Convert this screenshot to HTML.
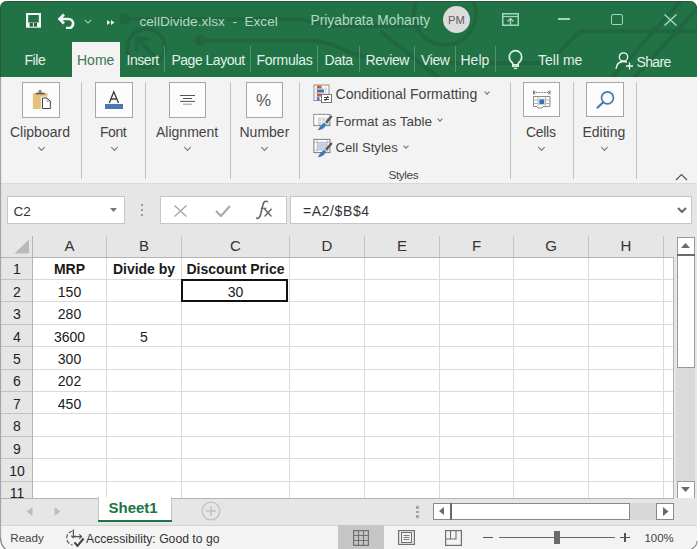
<!DOCTYPE html>
<html><head><meta charset="utf-8">
<style>
*{margin:0;padding:0;box-sizing:border-box}
html,body{width:700px;height:549px;overflow:hidden;background:#fff;font-family:"Liberation Sans",sans-serif;position:relative}
.a{position:absolute;white-space:nowrap;line-height:1}
#win{position:absolute;left:0;top:1px;width:697px;height:548px;background:#f3f3f3;border-radius:7px 7px 6px 6px;overflow:hidden}
#lb{position:absolute;left:0;top:40px;width:1px;height:506px;background:#707070}
#title{position:absolute;left:0;top:1px;width:697px;height:76px;background:#217346;border-radius:7px 7px 0 0;overflow:hidden}
.tt{color:#b4d9c1;font-size:13.6px}
.tab{color:#e2f1e7;font-size:14px}
.tsep{position:absolute;top:46px;height:26px;width:1px;background:#4f9670}
.ib{position:absolute;top:82px;width:37px;height:35px;border:1px solid #a6a6a6;background:#fcfcfc}
.gl{color:#444;font-size:14px}
.chev{position:absolute;width:5px;height:5px;border-right:1px solid #6e6e6e;border-bottom:1px solid #6e6e6e;transform:rotate(45deg)}
.vs{position:absolute;top:82px;height:97px;width:1px;background:#c4c4c4}
.hdr{position:absolute;color:#333;font-size:14px;text-align:center;line-height:1}
.hl{position:absolute;background:#bcbcbc}
.gh{position:absolute;height:1px;background:#dcdcdc}
.gv{position:absolute;width:1px;background:#dcdcdc}
.c{position:absolute;font-size:14px;color:#1a1a1a;text-align:center;line-height:1}
.b{font-weight:bold}
</style></head><body>
<div id="win"></div>
<div id="title">
  <svg class="a" style="left:0;top:0" width="697" height="76" viewBox="0 0 697 76">
    <g fill="none" stroke="#22663f" stroke-width="4" opacity="1">
      <path d="M125 18 H300 L330 25 H420"/>
      <circle cx="125" cy="18" r="3.5" fill="#22663f"/>
      <circle cx="146" cy="47" r="19"/>
      <path d="M156 57 L138 39 M137 50 V38 H149"/>
      <circle cx="200" cy="39.5" r="3.5" fill="#22663f"/>
      <path d="M200 39.5 H310 Q330 40 350 52 L395 62"/>
      <circle cx="445" cy="13" r="31"/>
      <path d="M380 30 L440 78"/>
      <path d="M548 62 L580 30.3 H697"/>
      <path d="M681 0 L611 78"/>
      <path d="M704 0 L633 78"/>
      <path d="M440 62 H548"/>
    </g>
  </svg>
</div>
<!-- save icon -->
<svg class="a" style="left:26px;top:13px" width="16" height="15" viewBox="0 0 16 15">
  <path d="M0 0 H15 V14.7 H0 Z" fill="#f3f8f5"/>
  <rect x="2.2" y="2" width="10.6" height="7.6" fill="#217346"/>
  <rect x="3.7" y="10" width="7.3" height="3.6" fill="#2a5d42"/>
  <rect x="6.9" y="10" width="1" height="3.6" fill="#f3f8f5"/>
</svg>
<!-- undo -->
<svg class="a" style="left:57px;top:13px" width="20" height="16" viewBox="0 0 20 16">
  <path d="M3 6 H11.5 A4.6 4.6 0 0 1 11.5 15.2 H9" fill="none" stroke="#f3f8f5" stroke-width="2.7"/>
  <path d="M7 1.5 L2.5 6 L7 10.5" fill="none" stroke="#f3f8f5" stroke-width="2.7" stroke-linejoin="miter"/>
</svg>
<svg class="a" style="left:83.5px;top:18.5px" width="8" height="5" viewBox="0 0 8 5">
  <path d="M0.8 0.8 L4 4 L7.2 0.8" fill="none" stroke="#9cc9ad" stroke-width="1.1"/>
</svg>
<svg class="a" style="left:106.5px;top:20px" width="8" height="5" viewBox="0 0 8 5">
  <path d="M0 0 L3.4 2.5 L0 5 Z M4 0 L7.5 2.5 L4 5 Z" fill="#eaf4ee"/>
</svg>
<div class="a tt" style="left:139.5px;top:14.5px">cellDivide.xlsx&nbsp; - &nbsp;Excel</div>
<div class="a tt" style="left:310.5px;top:13.8px;font-size:13.8px">Priyabrata Mohanty</div>
<div class="a" style="left:443px;top:6px;width:27px;height:27px;border-radius:50%;background:#dcdcdc"></div>
<div class="a" style="left:443px;top:14.5px;width:27px;text-align:center;font-size:11.2px;color:#5e5e5e">PM</div>
<!-- ribbon display options -->
<svg class="a" style="left:502px;top:13px" width="17" height="13" viewBox="0 0 17 13">
  <rect x="0.75" y="0.75" width="15.5" height="11.5" fill="none" stroke="#a7d3b8" stroke-width="1.5"/>
  <path d="M1 3.5 H16" stroke="#a7d3b8" stroke-width="1.2"/>
  <path d="M8.5 12 V6 M5.5 8.5 L8.5 5.5 L11.5 8.5" fill="none" stroke="#a7d3b8" stroke-width="1.4"/>
</svg>
<div class="a" style="left:558px;top:18px;width:12px;height:1.5px;background:#a7d3b8"></div>
<div class="a" style="left:611px;top:14px;width:12px;height:11px;border:1.4px solid #a7d3b8;border-radius:2px"></div>
<svg class="a" style="left:664px;top:13.5px" width="13" height="12" viewBox="0 0 13 12">
  <path d="M0.5 0.5 L12.5 11.5 M12.5 0.5 L0.5 11.5" stroke="#a7d3b8" stroke-width="1.5"/>
</svg>

<div class="a tab" style="left:24.5px;top:52.6px;letter-spacing:-0.45px">File</div>
<div class="a" style="left:72px;top:42px;width:48px;height:36px;background:#f3f3f3"></div>
<div class="a tab" style="left:77px;top:52.6px;color:#3b7754">Home</div>
<div class="a tab" style="left:126.5px;top:52.6px;letter-spacing:-0.45px">Insert</div>
<div class="tsep" style="left:164px"></div>
<div class="a tab" style="left:171.5px;top:52.6px;letter-spacing:-0.5px">Page Layout</div>
<div class="tsep" style="left:250px"></div>
<div class="a tab" style="left:256.5px;top:52.6px;letter-spacing:-0.31px">Formulas</div>
<div class="tsep" style="left:317px"></div>
<div class="a tab" style="left:324.5px;top:52.6px;letter-spacing:-0.33px">Data</div>
<div class="tsep" style="left:359px"></div>
<div class="a tab" style="left:365.5px;top:52.6px;letter-spacing:-0.4px">Review</div>
<div class="tsep" style="left:413.5px"></div>
<div class="a tab" style="left:421px;top:52.6px;letter-spacing:-0.4px">View</div>
<div class="tsep" style="left:455px"></div>
<div class="a tab" style="left:460.5px;top:52.6px">Help</div>
<div class="tsep" style="left:495px"></div>
<!-- lightbulb -->
<svg class="a" style="left:507px;top:49px" width="17" height="22" viewBox="0 0 17 22">
  <path d="M5.8 17.2 V14.2 C3.6 12.6 2.3 10.3 2.3 7.9 A6.2 6.2 0 0 1 14.7 7.9 C14.7 10.3 13.4 12.6 11.2 14.2 V17.2 Z" fill="none" stroke="#dcefe3" stroke-width="1.7"/>
  <path d="M6 15.6 H11" stroke="#dcefe3" stroke-width="1.2"/>
  <path d="M6.8 19.4 H10.2" stroke="#dcefe3" stroke-width="1.4"/>
</svg>
<div class="a tab" style="left:538px;top:52.6px">Tell me</div>
<!-- person add -->
<svg class="a" style="left:615px;top:52px" width="19" height="18" viewBox="0 0 19 18">
  <circle cx="8.5" cy="5" r="4.2" fill="none" stroke="#f2f7f4" stroke-width="1.3"/>
  <path d="M1 17 C1.5 12 4.5 9.5 8.5 9.5 C10 9.5 11 9.8 12 10.3" fill="none" stroke="#f2f7f4" stroke-width="1.3"/>
  <path d="M14.5 10.5 V17.5 M11 14 H18" stroke="#f2f7f4" stroke-width="1.3"/>
</svg>
<div class="a tab" style="left:636.5px;top:54.6px;letter-spacing:-0.66px">Share</div>

<div class="a" style="left:1px;top:183px;width:696px;height:1px;background:#dadada"></div>
<!-- Clipboard -->
<div class="ib" style="left:22px;width:38px;height:36px"></div>
<svg class="a" style="left:31px;top:88px" width="22" height="23" viewBox="0 0 22 23">
  <rect x="1.9" y="5" width="14.5" height="16" fill="#e6c07f"/>
  <circle cx="9.1" cy="3.4" r="1.7" fill="#8a8a8a"/>
  <rect x="4.9" y="4.7" width="8.8" height="1.7" fill="#5a5a5a"/>
  <path d="M10.6 9.3 H16.3 L19.9 12.9 V21 H10.6 Z" fill="#fff" stroke="#f3f3f3" stroke-width="1.5"/>
  <path d="M11.5 10 H16 L19.3 13.3 V20.5 H11.5 Z" fill="#fff" stroke="#444" stroke-width="1"/>
  <path d="M16 10 V13.3 H19.3" fill="none" stroke="#888" stroke-width="0.8"/>
</svg>
<div class="a gl" style="left:10px;top:124.6px">Clipboard</div>
<div class="chev" style="left:38.5px;top:145px"></div>
<div class="vs" style="left:81px"></div>
<!-- Font -->
<div class="ib" style="left:95px;width:38px;height:36px"></div>
<svg class="a" style="left:104px;top:90px" width="20" height="20" viewBox="0 0 20 20"><path d="M5.3 13 L9.8 1.8 L14.5 13 M7 9 H12.8" fill="none" stroke="#3c3c3c" stroke-width="1.35"/></svg>
<div class="a" style="left:104.5px;top:104.3px;width:18.5px;height:4.3px;background:#4a78b0"></div>
<div class="a gl" style="left:100px;top:124.6px;letter-spacing:-0.45px">Font</div>
<div class="chev" style="left:111.5px;top:145px"></div>
<div class="vs" style="left:145px"></div>
<!-- Alignment -->
<div class="ib" style="left:169px;width:37px;height:36px"></div>
<svg class="a" style="left:179px;top:94px" width="17" height="12" viewBox="0 0 17 12">
  <path d="M1 1.5 H16 M4 4.5 H13 M1 7.4 H16" stroke="#555" stroke-width="1"/>
  <path d="M4 10.2 H13" stroke="#9a9a9a" stroke-width="1"/>
</svg>
<div class="a gl" style="left:156px;top:124.6px">Alignment</div>
<div class="chev" style="left:184.5px;top:145px"></div>
<div class="vs" style="left:229.5px"></div>
<!-- Number -->
<div class="ib" style="left:245.5px;width:37px;height:36px"></div>
<div class="a" style="left:256px;top:92px;font-size:17px;color:#585858">%</div>
<div class="a gl" style="left:239.5px;top:124.6px">Number</div>
<div class="chev" style="left:261.5px;top:145px"></div>
<div class="vs" style="left:299px"></div>
<!-- Styles -->
<svg class="a" style="left:313px;top:84px" width="20" height="20" viewBox="0 0 20 20">
  <rect x="1" y="1" width="15" height="15.5" fill="#fff" stroke="#8c8c8c" stroke-width="1"/>
  <path d="M1 5 H16 M1 9 H16 M1 13 H16 M4 1 V16.5 M9 1 V16.5 M12.5 1 V16.5" stroke="#c9c9c9" stroke-width="0.8"/>
  <rect x="4" y="1.5" width="4.5" height="3" fill="#d2583a"/>
  <rect x="4" y="5.5" width="7" height="3" fill="#3d78b6"/>
  <rect x="4" y="9.5" width="4" height="3" fill="#d2583a"/>
  <rect x="4" y="13.3" width="2.5" height="3" fill="#3d78b6"/>
  <rect x="8.5" y="10.5" width="10" height="8" fill="#fff" stroke="#777" stroke-width="1"/>
  <path d="M11 13.5 H16 M11 15.5 H16 M15 12 L12 17" stroke="#333" stroke-width="0.9"/>
</svg>
<div class="a gl" style="left:335.5px;top:87px;font-size:14.1px">Conditional Formatting</div>
<div class="chev" style="left:484.5px;top:90px;width:4px;height:4px"></div>
<svg class="a" style="left:313px;top:113px" width="20" height="19" viewBox="0 0 20 19">
  <rect x="0.9" y="1.4" width="16" height="11.2" fill="#ccd6e1" stroke="#7a7a7a" stroke-width="1"/>
  <rect x="1.4" y="1.9" width="15" height="2.6" fill="#fff"/>
  <rect x="1.4" y="1.9" width="2.8" height="10.2" fill="#fff"/>
  <path d="M4.5 1.5 V12.5 M8.5 1.5 V12.5 M12.5 1.5 V12.5 M1 8.4 H16.9" stroke="#f4f6f8" stroke-width="0.9"/>
  <path d="M17.6 2.6 C19 2.3 19.8 3.4 19 4.6 L14 10.6 L12.1 9 Z" fill="#575757"/>
  <path d="M12.1 9 L14 10.6 L13.1 11.5 L11.2 9.9 Z" fill="#c4c4c4"/>
  <path d="M11.2 9.9 L13.1 11.5 C12.2 14.3 9.6 16.8 4.8 17.2 C6.3 14.2 8.4 11.1 11.2 9.9 Z" fill="#4079bd"/>
</svg>
<div class="a gl" style="left:335.5px;top:114.9px;font-size:13.5px">Format as Table</div>
<div class="chev" style="left:438px;top:117px;width:4px;height:4px"></div>
<svg class="a" style="left:313px;top:138px" width="20" height="20" viewBox="0 0 20 20">
  <rect x="0.9" y="1.4" width="16" height="13.2" fill="#fff" stroke="#7a7a7a" stroke-width="1"/>
  <rect x="4.5" y="4.6" width="9.5" height="7.2" fill="#c3d2e4"/>
  <path d="M1 4.3 H16.9 M1 12 H16.9 M4.2 1.5 V14.5 M14.2 1.5 V14.5" stroke="#b0b0b0" stroke-width="0.8"/>
  <path d="M17.6 4.6 C19 4.3 19.8 5.4 19 6.6 L14 12.6 L12.1 11 Z" fill="#575757"/>
  <path d="M12.1 11 L14 12.6 L13.1 13.5 L11.2 11.9 Z" fill="#c4c4c4"/>
  <path d="M11.2 11.9 L13.1 13.5 C12.2 16.3 9.6 18.8 4.8 19.2 C6.3 16.2 8.4 13.1 11.2 11.9 Z" fill="#4079bd"/>
</svg>
<div class="a gl" style="left:335.5px;top:141px;font-size:13.2px">Cell Styles</div>
<div class="chev" style="left:403.5px;top:144px;width:4px;height:4px"></div>
<div class="a gl" style="left:388.5px;top:169.6px;font-size:11.8px;letter-spacing:-0.4px">Styles</div>
<div class="vs" style="left:510px"></div>
<!-- Cells -->
<div class="ib" style="left:523px;width:37px;height:35px"></div>
<svg class="a" style="left:532px;top:89px" width="20" height="21" viewBox="0 0 20 21">
  <path d="M1.5 3.5 H18" stroke="#666" stroke-width="0.9" stroke-dasharray="1.6 1"/>
  <path d="M1.5 1.5 V5.5 M18 1.5 V5.5 M1.5 3.5 L3.5 2 M1.5 3.5 L3.5 5 M18 3.5 L16 2 M18 3.5 L16 5" stroke="#666" stroke-width="0.8"/>
  <path d="M1.5 7.5 H18 V17.5 H11 L10 19 H6 L5 17.5 H1.5 Z" fill="#fff" stroke="#8a8a8a" stroke-width="1"/>
  <path d="M1.5 11 H18 M1.5 14.5 H18 M6 7.5 V17.5 M13.5 7.5 V17.5" stroke="#a5a5a5" stroke-width="0.8"/>
  <rect x="6" y="9.5" width="7" height="6.5" fill="#c9d6e6"/>
  <rect x="7.5" y="10.5" width="4.5" height="4.5" fill="#3a6fae"/>
</svg>
<div class="a gl" style="left:526px;top:124.6px;letter-spacing:-0.3px">Cells</div>
<div class="chev" style="left:538.5px;top:145px"></div>
<div class="vs" style="left:573px"></div>
<!-- Editing -->
<div class="ib" style="left:586px;width:38px;height:35px"></div>
<svg class="a" style="left:595px;top:90px" width="20" height="20" viewBox="0 0 20 20">
  <circle cx="12.5" cy="7.8" r="6" fill="none" stroke="#4677ad" stroke-width="1.7"/>
  <path d="M8.2 12.2 L2.5 17.8" stroke="#4677ad" stroke-width="2" stroke-linecap="round"/>
</svg>
<div class="a gl" style="left:582.5px;top:124.6px">Editing</div>
<div class="chev" style="left:601.5px;top:145px"></div>
<div class="vs" style="left:635.5px"></div>
<svg class="a" style="left:675px;top:173px" width="13" height="8" viewBox="0 0 13 8">
  <path d="M1 7 L6.5 1.5 L12 7" fill="none" stroke="#555" stroke-width="1.2"/>
</svg>

<!--RIBBON-->

<!--GRIDSTART--><div class="a" style="left:1px;top:184px;width:696px;height:52px;background:#e6e6e6"></div>
<div class="a" style="left:1px;top:236px;width:673px;height:22px;background:#e6e6e6"></div>
<div class="a" style="left:1px;top:236px;width:32px;height:262px;background:#e6e6e6"></div>
<div class="a" style="left:7px;top:196px;width:118px;height:28px;background:#fff;border:1px solid #c6c6c6"></div>
<div class="a" style="left:13.5px;top:205px;font-size:13.5px;color:#333">C2</div>
<svg class="a" style="left:110px;top:208px" width="7" height="4" viewBox="0 0 7 4"><path d="M0 0 H7 L3.5 4 Z" fill="#777"/></svg>
<div class="a" style="left:141px;top:203.5px;width:2.2px;height:2.2px;background:#9a9a9a"></div>
<div class="a" style="left:141px;top:208.5px;width:2.2px;height:2.2px;background:#9a9a9a"></div>
<div class="a" style="left:141px;top:213.5px;width:2.2px;height:2.2px;background:#9a9a9a"></div>
<div class="a" style="left:160px;top:196px;width:127px;height:28px;background:#fff;border:1px solid #c6c6c6"></div>
<svg class="a" style="left:173px;top:205px" width="15" height="12" viewBox="0 0 15 12"><path d="M1.5 0.5 L13.5 11.5 M13.5 0.5 L1.5 11.5" stroke="#a8a8a8" stroke-width="1.4"/></svg>
<svg class="a" style="left:215px;top:205px" width="16" height="12" viewBox="0 0 16 12"><path d="M1 6 L6 11 L15 1" fill="none" stroke="#a8a8a8" stroke-width="2.1"/></svg>
<svg class="a" style="left:254px;top:199px" width="20" height="22" viewBox="0 0 20 22"><path d="M2.8 19.2 C4.8 20 6 18.5 7 14 L9 5.5 C9.8 2.5 11.5 1.6 13.6 2.6" fill="none" stroke="#666" stroke-width="1.6" stroke-linecap="round"/><path d="M6.8 9.3 H12.3" stroke="#666" stroke-width="1.2"/><path d="M10.8 10.2 L17 17 M17.2 10.2 L11 17" stroke="#666" stroke-width="1.5" stroke-linecap="round"/></svg>
<div class="a" style="left:290px;top:196px;width:402px;height:28px;background:#fff;border:1px solid #c6c6c6"></div>
<div class="a" style="left:303px;top:203.8px;font-size:14px;letter-spacing:0.6px;color:#333">=A2/$B$4</div>
<svg class="a" style="left:677px;top:207px" width="10" height="6" viewBox="0 0 10 6"><path d="M1 1 L5 5 L9 1" fill="none" stroke="#666" stroke-width="2"/></svg>
<div class="a" style="left:33px;top:258px;width:641px;height:240px;background:#fff"></div>
<div class="a" style="left:106.0px;top:258px;width:1px;height:240px;background:#dadada"></div>
<div class="a" style="left:181.0px;top:258px;width:1px;height:240px;background:#dadada"></div>
<div class="a" style="left:289.0px;top:258px;width:1px;height:240px;background:#dadada"></div>
<div class="a" style="left:364.0px;top:258px;width:1px;height:240px;background:#dadada"></div>
<div class="a" style="left:439.0px;top:258px;width:1px;height:240px;background:#dadada"></div>
<div class="a" style="left:513.0px;top:258px;width:1px;height:240px;background:#dadada"></div>
<div class="a" style="left:588.0px;top:258px;width:1px;height:240px;background:#dadada"></div>
<div class="a" style="left:663.0px;top:258px;width:1px;height:240px;background:#dadada"></div>
<div class="a" style="left:33px;top:279.0px;width:641px;height:1px;background:#dadada"></div>
<div class="a" style="left:33px;top:301.0px;width:641px;height:1px;background:#dadada"></div>
<div class="a" style="left:33px;top:324.0px;width:641px;height:1px;background:#dadada"></div>
<div class="a" style="left:33px;top:346.0px;width:641px;height:1px;background:#dadada"></div>
<div class="a" style="left:33px;top:369.0px;width:641px;height:1px;background:#dadada"></div>
<div class="a" style="left:33px;top:391.0px;width:641px;height:1px;background:#dadada"></div>
<div class="a" style="left:33px;top:413.0px;width:641px;height:1px;background:#dadada"></div>
<div class="a" style="left:33px;top:436.0px;width:641px;height:1px;background:#dadada"></div>
<div class="a" style="left:33px;top:458.0px;width:641px;height:1px;background:#dadada"></div>
<div class="a" style="left:33px;top:481.0px;width:641px;height:1px;background:#dadada"></div>
<div class="a" style="left:106.0px;top:236px;width:1px;height:21px;background:#c3c3c3"></div>
<div class="a" style="left:181.0px;top:236px;width:1px;height:21px;background:#c3c3c3"></div>
<div class="a" style="left:289.0px;top:236px;width:1px;height:21px;background:#c3c3c3"></div>
<div class="a" style="left:364.0px;top:236px;width:1px;height:21px;background:#c3c3c3"></div>
<div class="a" style="left:439.0px;top:236px;width:1px;height:21px;background:#c3c3c3"></div>
<div class="a" style="left:513.0px;top:236px;width:1px;height:21px;background:#c3c3c3"></div>
<div class="a" style="left:588.0px;top:236px;width:1px;height:21px;background:#c3c3c3"></div>
<div class="a" style="left:663.0px;top:236px;width:1px;height:21px;background:#c3c3c3"></div>
<div class="a" style="left:1px;top:279.0px;width:32px;height:1px;background:#c3c3c3"></div>
<div class="a" style="left:1px;top:301.0px;width:32px;height:1px;background:#c3c3c3"></div>
<div class="a" style="left:1px;top:324.0px;width:32px;height:1px;background:#c3c3c3"></div>
<div class="a" style="left:1px;top:346.0px;width:32px;height:1px;background:#c3c3c3"></div>
<div class="a" style="left:1px;top:369.0px;width:32px;height:1px;background:#c3c3c3"></div>
<div class="a" style="left:1px;top:391.0px;width:32px;height:1px;background:#c3c3c3"></div>
<div class="a" style="left:1px;top:413.0px;width:32px;height:1px;background:#c3c3c3"></div>
<div class="a" style="left:1px;top:436.0px;width:32px;height:1px;background:#c3c3c3"></div>
<div class="a" style="left:1px;top:458.0px;width:32px;height:1px;background:#c3c3c3"></div>
<div class="a" style="left:1px;top:481.0px;width:32px;height:1px;background:#c3c3c3"></div>
<div class="a" style="left:1px;top:257px;width:673px;height:1px;background:#b4b4b4"></div>
<div class="a" style="left:32px;top:236px;width:1px;height:262px;background:#b4b4b4"></div>
<svg class="a" style="left:14px;top:239px" width="16" height="15" viewBox="0 0 16 15"><path d="M15 0.5 V14.5 H0.5 Z" fill="#b9b9b9"/></svg>
<div class="hdr" style="left:32.5px;top:237.8px;width:74.0px;font-size:15px">A</div>
<div class="hdr" style="left:106.5px;top:237.8px;width:75.0px;font-size:15px">B</div>
<div class="hdr" style="left:181.5px;top:237.8px;width:108.0px;font-size:15px">C</div>
<div class="hdr" style="left:289.5px;top:237.8px;width:75.0px;font-size:15px">D</div>
<div class="hdr" style="left:364.5px;top:237.8px;width:75.0px;font-size:15px">E</div>
<div class="hdr" style="left:439.5px;top:237.8px;width:74.0px;font-size:15px">F</div>
<div class="hdr" style="left:513.5px;top:237.8px;width:75.0px;font-size:15px">G</div>
<div class="hdr" style="left:588.5px;top:237.8px;width:75.0px;font-size:15px">H</div>
<div class="hdr" style="left:1px;top:262.35px;width:32px;font-size:14px;color:#222">1</div>
<div class="hdr" style="left:1px;top:284.75px;width:32px;font-size:14px;color:#222">2</div>
<div class="hdr" style="left:1px;top:307.15px;width:32px;font-size:14px;color:#222">3</div>
<div class="hdr" style="left:1px;top:329.55px;width:32px;font-size:14px;color:#222">4</div>
<div class="hdr" style="left:1px;top:351.95px;width:32px;font-size:14px;color:#222">5</div>
<div class="hdr" style="left:1px;top:374.35px;width:32px;font-size:14px;color:#222">6</div>
<div class="hdr" style="left:1px;top:396.75px;width:32px;font-size:14px;color:#222">7</div>
<div class="hdr" style="left:1px;top:419.15px;width:32px;font-size:14px;color:#222">8</div>
<div class="hdr" style="left:1px;top:441.55px;width:32px;font-size:14px;color:#222">9</div>
<div class="hdr" style="left:1px;top:463.95px;width:32px;font-size:14px;color:#222">10</div>
<div class="hdr" style="left:1px;top:486.35px;width:32px;font-size:14px;color:#222">11</div>
<div class="c b" style="left:32.5px;top:262.35px;width:74.0px">MRP</div>
<div class="c b" style="left:106.5px;top:262.35px;width:75.0px">Divide by</div>
<div class="c b" style="left:181.5px;top:262.35px;width:108.0px">Discount Price</div>
<div class="c" style="left:32.5px;top:284.75px;width:74.0px">150</div>
<div class="c" style="left:32.5px;top:307.15px;width:74.0px">280</div>
<div class="c" style="left:32.5px;top:329.55px;width:74.0px">3600</div>
<div class="c" style="left:32.5px;top:351.95px;width:74.0px">300</div>
<div class="c" style="left:32.5px;top:374.35px;width:74.0px">202</div>
<div class="c" style="left:32.5px;top:396.75px;width:74.0px">450</div>
<div class="c" style="left:106.5px;top:329.55px;width:75.0px">5</div>
<div class="c" style="left:181.5px;top:284.75px;width:108.0px">30</div>
<div class="a" style="left:180.5px;top:278.5px;width:107px;height:23.5px;border:2px solid #111"></div>
<div class="a" style="left:673px;top:257px;width:1px;height:241px;background:#b4b4b4"></div>
<div class="a" style="left:1px;top:497.5px;width:673px;height:1px;background:#b4b4b4"></div>
<div class="a" style="left:674px;top:236px;width:23px;height:262px;background:#e6e6e6"></div>
<div class="a" style="left:676px;top:368px;width:19px;height:113px;background:#dadada"></div>
<div class="a" style="left:677px;top:237px;width:17.5px;height:130.5px;background:#fff;border:1px solid #9a9a9a;border-right-width:1.5px"></div>
<div class="a" style="left:677px;top:254px;width:17.5px;height:1.6px;background:#6a6a6a"></div>
<svg class="a" style="left:681px;top:243px" width="9" height="5" viewBox="0 0 9 5"><path d="M0 5 L4.5 0 L9 5 Z" fill="#6a6a6a"/></svg>
<div class="a" style="left:677px;top:481px;width:17.5px;height:17.5px;background:#fff;border:1px solid #9a9a9a"></div>
<svg class="a" style="left:681px;top:487px" width="9" height="5" viewBox="0 0 9 5"><path d="M0 0 L4.5 5 L9 0 Z" fill="#6a6a6a"/></svg><!--GRIDEND-->
<!--BOTSTART--><div class="a" style="left:1px;top:498px;width:696px;height:27px;background:#e6e6e6"></div>
<div class="a" style="left:1px;top:497.5px;width:673px;height:1.5px;background:#b4b4b4"></div>
<svg class="a" style="left:26px;top:507px" width="7" height="9" viewBox="0 0 7 9"><path d="M6.5 0 V9 L0.5 4.5 Z" fill="#bdbdbd"/></svg>
<svg class="a" style="left:53.5px;top:507px" width="7" height="9" viewBox="0 0 7 9"><path d="M0.5 0 V9 L6.5 4.5 Z" fill="#bdbdbd"/></svg>
<div class="a" style="left:97.5px;top:497px;width:74px;height:25px;background:#fff;border-left:1px solid #c4c4c4;border-right:1px solid #c4c4c4"></div>
<div class="a" style="left:97.5px;top:520px;width:74px;height:2px;background:#217346"></div>
<div class="a b" style="left:108.5px;top:500.3px;font-size:15px;color:#217346">Sheet1</div>
<svg class="a" style="left:201px;top:501px" width="20" height="20" viewBox="0 0 20 20"><circle cx="10" cy="10" r="8.8" fill="none" stroke="#c2c2c2" stroke-width="1.3"/><path d="M10 5 V15 M5 10 H15" stroke="#c2c2c2" stroke-width="1.4"/></svg>
<div class="a" style="left:416.2px;top:506px;width:2.8px;height:2.6px;background:#a5a5a5"></div>
<div class="a" style="left:416.2px;top:510.5px;width:2.8px;height:2.6px;background:#a5a5a5"></div>
<div class="a" style="left:416.2px;top:515px;width:2.8px;height:2.6px;background:#a5a5a5"></div>
<div class="a" style="left:433px;top:502.5px;width:197px;height:17px;background:#fff;border:1px solid #8a8a8a"></div>
<div class="a" style="left:450px;top:502.5px;width:1.5px;height:17px;background:#6a6a6a"></div>
<svg class="a" style="left:438.5px;top:507px" width="5" height="8" viewBox="0 0 5 8"><path d="M5 0 V8 L0 4 Z" fill="#6a6a6a"/></svg>
<div class="a" style="left:630px;top:502.5px;width:25.5px;height:17px;background:#d8d8d8"></div>
<div class="a" style="left:655.5px;top:502.5px;width:18.5px;height:17px;background:#fff;border:1px solid #8a8a8a"></div>
<svg class="a" style="left:663px;top:507px" width="6" height="9" viewBox="0 0 6 9"><path d="M0 0 V9 L5.5 4.5 Z" fill="#6a6a6a"/></svg>
<!-- status bar -->
<div class="a" style="left:1px;top:525px;width:696px;height:1px;background:#d4d4d4"></div>
<div class="a" style="left:1px;top:526px;width:696px;height:23px;background:#f3f3f3"></div>
<div class="a" style="left:10.3px;top:531.8px;font-size:11.6px;color:#444">Ready</div>
<svg class="a" style="left:64px;top:528px" width="22" height="20" viewBox="0 0 22 20">
  <path d="M8.5 3.2 A7 7 0 0 0 8.5 17" fill="none" stroke="#666" stroke-width="1.3" stroke-dasharray="4 1.8"/>
  <path d="M9.4 1.5 V9.5 M7.3 7.6 L9.4 9.7 L11.5 7.6 M7.5 8.6 H17.5 M15.3 6.4 L17.5 8.6 L15.3 10.8" fill="none" stroke="#555" stroke-width="1.2"/>
  <path d="M10.5 14.3 L13.5 18 L19.6 10.5" fill="none" stroke="#444" stroke-width="2"/>
</svg>
<div class="a" style="left:86px;top:532.8px;font-size:12.2px;color:#333">Accessibility: Good to go</div>
<div class="a" style="left:337.5px;top:525px;width:46px;height:24px;background:#c6c6c6"></div>
<svg class="a" style="left:353px;top:530px" width="16" height="16" viewBox="0 0 16 16">
  <rect x="0.6" y="0.6" width="14.8" height="14.8" fill="none" stroke="#707070" stroke-width="1.2"/>
  <path d="M5.5 0.5 V15.5 M10.5 0.5 V15.5 M0.5 5.5 H15.5 M0.5 10.5 H15.5" stroke="#707070" stroke-width="1.1"/>
</svg>
<svg class="a" style="left:398px;top:530px" width="17" height="15" viewBox="0 0 17 15">
  <rect x="0.6" y="0.6" width="15.8" height="13.8" fill="none" stroke="#707070" stroke-width="1.2"/>
  <rect x="3.5" y="2.5" width="10" height="10" fill="none" stroke="#707070" stroke-width="1"/>
  <path d="M5.5 5.5 H11.5 M5.5 7.5 H11.5 M5.5 9.5 H11.5" stroke="#707070" stroke-width="0.9"/>
</svg>
<svg class="a" style="left:445px;top:530px" width="17" height="16" viewBox="0 0 17 16">
  <rect x="0.6" y="0.6" width="15.8" height="14.8" fill="none" stroke="#707070" stroke-width="1.2"/>
  <path d="M5.5 1 V9 H11 V1 M1 9 H5.5" fill="none" stroke="#707070" stroke-width="1.1"/>
</svg>
<div class="a" style="left:483px;top:536.7px;width:9.5px;height:1.3px;background:#555"></div>
<div class="a" style="left:498.5px;top:536.9px;width:116.5px;height:1.2px;background:#6a6a6a"></div>
<div class="a" style="left:554px;top:530.5px;width:6px;height:13.5px;background:#6a6a6a"></div>
<div class="a" style="left:620.3px;top:536.7px;width:9.5px;height:1.3px;background:#555"></div>
<div class="a" style="left:624.4px;top:532.6px;width:1.3px;height:9.5px;background:#555"></div>
<div class="a" style="left:644.5px;top:532.7px;font-size:11.4px;color:#444">100%</div>
<!--BOTEND-->
<svg class="a" style="left:0;top:0" width="700" height="549" viewBox="0 0 700 549"><path d="M0 538 V549 H7 Q1 546 1 538 Z" fill="#fff"/><path d="M0.6 538 V7.5 Q0.6 1.5 7 1.5 H690 Q696.5 1.5 696.5 8" fill="none" stroke="rgba(50,50,50,0.45)" stroke-width="1"/><path d="M0.6 538 Q0.6 546 6.5 550" fill="none" stroke="rgba(50,50,50,0.58)" stroke-width="1.3"/></svg>
<svg class="a" style="left:680px;top:530px" width="20" height="19" viewBox="0 0 20 19"><path d="M17.5 0 V11 Q17.5 17.5 10.5 19.5 H20 V0 Z" fill="#fff"/><path d="M17 11 Q17 17 10.5 19.5" fill="none" stroke="#8a8a8a" stroke-width="1.1"/></svg>
</body></html>
